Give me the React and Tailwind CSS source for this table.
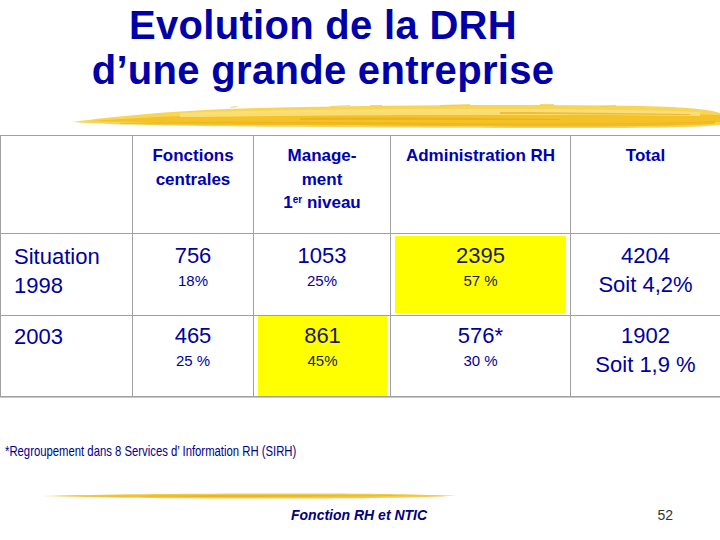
import React from 'react';

const sans = { fontFamily: '"Liberation Sans", Arial, sans-serif' };

const TopBrush = () => (
    <svg width="720" height="30" viewBox="0 0 720 30" className="block">
        <path d="M72 23 C120 17 180 11 260 9 C380 6 520 5 640 7 C690 8 712 11 720 14 L720 26 C690 29 640 29 560 29 C440 29 300 28 200 27 C140 26 100 25 72 23 Z" fill="#f6cf3a" opacity="0.85" />
        <path d="M90 22 C160 17 240 14 340 13 C460 12 600 12 720 16 L720 23 C620 26 480 26 360 25 C240 24 160 24 90 22 Z" fill="#f2bd1c" opacity="0.8" />
        <path d="M180 14 C260 11 360 10 470 10 C560 10 640 11 700 13 L700 17 C620 16 540 16 450 16 C360 16 260 17 180 18 Z" fill="#fbe07a" opacity="0.9" />
        <path d="M120 24 C220 22 330 23 450 24 C560 25 650 25 715 22 L715 25 C650 28 560 28 450 27 C330 26 220 26 120 25 Z" fill="#eab21a" opacity="0.7" />
        <path d="M300 19 C380 18 470 19 560 20 L560 21 C470 21 380 21 300 21 Z M500 13 C560 13 620 14 690 15 L690 16 C620 16 560 15 500 15 Z" fill="#e9a915" opacity="0.6" />
        <path d="M230 8 l6 -1 l2 1 l-7 1 Z M330 7 l20 -1 l1 1 l-20 1 Z M370 6 l12 0 l0 1 l-12 0 Z M440 6 l30 -1 l0 1.5 l-30 1 Z M540 5 l14 0 l0 1.5 l-14 0 Z M600 7 l16 -1 l0 1 l-16 1 Z" fill="#f3c73a" opacity="0.7" />
    </svg>
);

const BottomBrush = () => (
    <svg width="460" height="10" viewBox="0 0 460 10" className="block">
        <path d="M42 5 C120 3 220 2.4 320 2.6 C380 2.8 420 3.6 456 4.8 C420 6.6 360 7.6 280 7.6 C180 7.6 100 6.8 42 5 Z" fill="#f3c53a" opacity="0.9" />
        <path d="M80 5 C180 3.8 300 3.8 430 4.6 C320 6.2 180 6.4 80 5 Z" fill="#e6ad1a" opacity="0.75" />
    </svg>
);

const Head = ({ children }) => (
    <div className="border-r border-b border-[#a0a0a0] pt-[8px] text-center text-[17px] leading-[23.5px] font-bold text-[#0000b4]">
        {children}
    </div>
);

const App = () => {
    return (
        <div className="w-[720px] h-[540px] bg-white overflow-hidden flex flex-col" style={sans}>
            {/* Title */}
            <h1 className="w-[646px] text-center text-[#0000a8] font-bold pt-[3px] text-[40px] leading-[45px] tracking-[0.3px]">
                Evolution de la DRH<br />d’une grande entreprise
            </h1>

            <div className="mt-[6px]">
                <TopBrush />
            </div>

            {/* Table */}
            <div className="mt-[6px] grid grid-cols-[132px_121px_137px_180px_150px] grid-rows-[98px_82px_80px] border-t border-l border-[#a0a0a0] border-b border-b-[#a0a0a0] shadow-[0_1px_0_#c8c8c8]">
                <div className="border-r border-b border-[#a0a0a0]" />
                <Head>Fonctions<br />centrales</Head>
                <Head>Manage-<br />ment<br />1<sup className="text-[10px]">er</sup> niveau</Head>
                <Head>Administration RH</Head>
                <Head>Total</Head>

                <div className="border-r border-b border-[#a0a0a0] pl-[13px] pt-[8px] text-[22px] leading-[29px] text-[#0000a0]">
                    Situation<br />1998
                </div>
                <div className="border-r border-b border-[#a0a0a0] pt-[8px] text-center text-[#0000a0]">
                    <div className="text-[22px] leading-[28px]">756</div>
                    <div className="text-[15px] leading-[22px]">18%</div>
                </div>
                <div className="border-r border-b border-[#a0a0a0] pt-[8px] text-center text-[#0000a0]">
                    <div className="text-[22px] leading-[28px]">1053</div>
                    <div className="text-[15px] leading-[22px]">25%</div>
                </div>
                <div className="border-r border-b border-[#a0a0a0] p-[2px] pl-[4px] pr-[4px] flex">
                    <div className="flex-1 bg-[#ffff00] text-center text-[#1c1c5c] pt-[6px]">
                        <div className="text-[22px] leading-[28px]">2395</div>
                        <div className="text-[15px] leading-[22px]">57 %</div>
                    </div>
                </div>
                <div className="border-r border-b border-[#a0a0a0] pt-[8px] text-center text-[#0000a0]">
                    <div className="text-[22px] leading-[28px]">4204</div>
                    <div className="text-[22px] leading-[29px]">Soit 4,2%</div>
                </div>

                <div className="border-r border-[#a0a0a0] pl-[13px] pt-[6px] text-[22px] leading-[29px] text-[#0000a0]">
                    2003
                </div>
                <div className="border-r border-[#a0a0a0] pt-[6px] text-center text-[#0000a0]">
                    <div className="text-[22px] leading-[28px]">465</div>
                    <div className="text-[15px] leading-[22px]">25 %</div>
                </div>
                <div className="border-r border-[#a0a0a0] pl-[4px] pr-[3px] flex">
                    <div className="flex-1 bg-[#ffff00] text-center text-[#1c1c5c] pt-[6px]">
                        <div className="text-[22px] leading-[28px]">861</div>
                        <div className="text-[15px] leading-[22px]">45%</div>
                    </div>
                </div>
                <div className="border-r border-[#a0a0a0] pt-[6px] text-center text-[#0000a0]">
                    <div className="text-[22px] leading-[28px]">576*</div>
                    <div className="text-[15px] leading-[22px]">30 %</div>
                </div>
                <div className="border-r border-[#a0a0a0] pt-[6px] text-center text-[#0000a0]">
                    <div className="text-[22px] leading-[28px]">1902</div>
                    <div className="text-[22px] leading-[29px]">Soit 1,9 %</div>
                </div>
            </div>

            {/* Footnote */}
            <div className="mt-[46px] pl-[5px]">
                <div className="origin-left scale-x-[0.78] whitespace-nowrap text-[14.5px] leading-[16px] text-[#00008c]">
                    *Regroupement dans 8 Services d’ Information RH (SIRH)
                </div>
            </div>

            <div className="mt-[32px]">
                <BottomBrush />
            </div>

            <div className="flex items-center mt-[6px] h-[16px]">
                <div className="w-[291px]" />
                <div className="text-[14px] font-bold italic text-[#000080]">Fonction RH et NTIC</div>
                <div className="ml-auto mr-[47px] text-[14px] text-[#333]">52</div>
            </div>
        </div>
    );
};

export default App;
